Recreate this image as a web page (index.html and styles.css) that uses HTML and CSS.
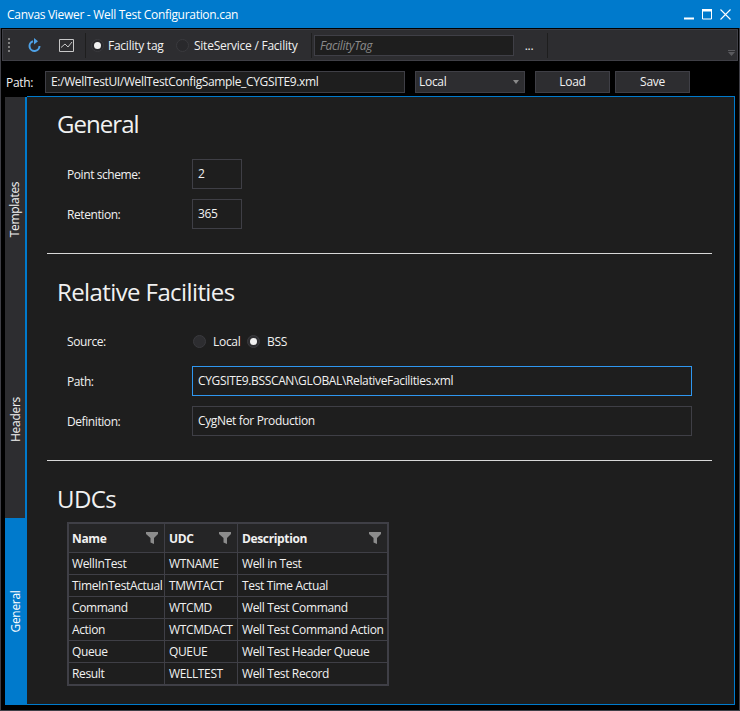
FILE: index.html
```html
<!DOCTYPE html>
<html lang="en">
<head>
    <meta charset="UTF-8">
    <meta name="viewport" content="width=device-width, initial-scale=1.0">
    <title>Canvas Viewer - Well Test Configuration.can</title>
    <link rel="stylesheet" href="styles.css">
</head>
<body>
    <div class="window">
        <div class="titlebar">
            <span class="title">Canvas Viewer - Well Test Configuration.can</span>
            <div class="window-buttons">
                <svg width="11" height="11" viewBox="0 0 11 11"><rect x="0" y="8.500" width="10" height="2" fill="#fff"/></svg>
                <svg width="11" height="11" viewBox="0 0 11 11"><path d="M.5.500h9v9.500h-9z" fill="none" stroke="#fff"/><rect x="0" y="0" width="10" height="2.500" fill="#fff"/></svg>
                <svg width="11" height="11" viewBox="0 0 11 11"><path d="M.5.500l10 10M10.500.500l-10 10" fill="none" stroke="#fff" stroke-width="1.100"/></svg>
            </div>
        </div>

        <div class="toolbar">
            <div class="grip"></div>
            <svg class="tool-icon refresh" width="13" height="15" viewBox="0 0 13 15"><path d="M5 3.200a5 5 0 1 0 6.500 4.800" fill="none" stroke="#4ea1e6" stroke-width="2"/><path d="M6 0v6.500l4-3.200z" fill="#4ea1e6"/></svg>
            <svg class="tool-icon chart" width="15" height="13" viewBox="0 0 15 13"><path d="M.5.500h14v12H.5z M2 8.500l4-3.500 3 3 4-5" fill="none" stroke="#c8c8c8"/></svg>
            <div class="tool-sep sep-one"></div>
            <label class="radio-row tool-radio-one"><span class="radio checked"></span>Facility tag</label>
            <label class="radio-row tool-radio-two"><span class="radio"></span>SiteService / Facility</label>
            <div class="tool-sep sep-two"></div>
            <div class="tag-input">FacilityTag</div>
            <span class="dots">...</span>
            <div class="tool-sep"></div>
            <svg class="overflow" width="7" height="6" viewBox="0 0 7 6"><path d="M0 0h7v1H0z M0 2h7L3.500 6z" fill="#5a5a5e"/></svg>
        </div>

        <div class="path-row">
            <span class="path-label">Path:</span>
            <div class="field path-field">E:/WellTestUI/WellTestConfigSample_CYGSITE9.xml</div>
            <div class="field select">Local<svg width="6" height="4" viewBox="0 0 6 4"><path d="M0 0h6L3 4z" fill="#8a8a8a"/></svg></div>
            <div class="field btn">Load</div>
            <div class="field btn">Save</div>
        </div>

        <div class="main">
            <div class="tabs">
                <div class="tab tab-templates"><span>Templates</span></div>
                <div class="tab tab-headers"><span>Headers</span></div>
                <div class="tab tab-general active"><span>General</span></div>
            </div>
            <div class="panel">
                <h2 class="first">General</h2>
                <div class="form-row row-scheme">
                    <span class="label">Point scheme:</span>
                    <div class="box small">2</div>
                </div>
                <div class="form-row">
                    <span class="label">Retention:</span>
                    <div class="box small">365</div>
                </div>
                <hr class="rule rule-one">

                <h2>Relative Facilities</h2>
                <div class="form-row source-row">
                    <span class="label">Source:</span>
                    <label class="radio-row source-local"><span class="radio"></span>Local</label>
                    <label class="radio-row"><span class="radio checked"></span>BSS</label>
                </div>
                <div class="form-row path-row-inner">
                    <span class="label">Path:</span>
                    <div class="box wide focused">CYGSITE9.BSSCAN\GLOBAL\RelativeFacilities.xml</div>
                </div>
                <div class="form-row">
                    <span class="label">Definition:</span>
                    <div class="box wide">CygNet for Production</div>
                </div>
                <hr class="rule rule-two">

                <h2>UDCs</h2>
                <table class="grid">
                    <thead>
                        <tr>
                            <th class="col-name"><div class="th-inner">Name<svg width="12" height="12" viewBox="0 0 12 12"><path d="M0 0h12v2L8 6v6L4.500 10.500V6L0 2z" fill="#8c8c8c"/></svg></div></th>
                            <th class="col-udc"><div class="th-inner">UDC<svg width="12" height="12" viewBox="0 0 12 12"><path d="M0 0h12v2L8 6v6L4.500 10.500V6L0 2z" fill="#8c8c8c"/></svg></div></th>
                            <th class="col-desc"><div class="th-inner">Description<svg width="12" height="12" viewBox="0 0 12 12"><path d="M0 0h12v2L8 6v6L4.500 10.500V6L0 2z" fill="#8c8c8c"/></svg></div></th>
                        </tr>
                    </thead>
                    <tbody>
                        <tr><td>WellInTest</td><td>WTNAME</td><td>Well in Test</td></tr>
                        <tr><td>TimeInTestActual</td><td>TMWTACT</td><td>Test Time Actual</td></tr>
                        <tr><td>Command</td><td>WTCMD</td><td>Well Test Command</td></tr>
                        <tr><td>Action</td><td>WTCMDACT</td><td>Well Test Command Action</td></tr>
                        <tr><td>Queue</td><td>QUEUE</td><td>Well Test Header Queue</td></tr>
                        <tr><td>Result</td><td>WELLTEST</td><td>Well Test Record</td></tr>
                    </tbody>
                </table>
            </div>
        </div>
    </div>
</body>
</html>
```

FILE: styles.css
```css
html, body {
    margin: 0;
    padding: 0;
    height: 100%;
    overflow: hidden;
}
body {
    font-family: "Open Sans", "Noto Sans", sans-serif;
    font-size: 12px;
    letter-spacing: -0.3px;
    color: #f1f1f1;
    background-color: #000;
}
.window {
    box-sizing: border-box;
    width: 740px;
    height: 711px;
    background-color: #000;
    border: 1px solid #3f3f46;
    border-top: none;
    display: flex;
    flex-direction: column;
}
.titlebar {
    height: 28px;
    flex: none;
    background-color: #007acc;
    color: #fff;
    display: flex;
    align-items: center;
    justify-content: space-between;
    padding: 0 9px 0 7px;
    margin: 0 -1px;
}
.title {
    letter-spacing: -0.3px;
}
.window-buttons {
    display: flex;
    gap: 7px;
}
.window-buttons svg {
    display: block;
}
.toolbar {
    height: 30px;
    margin: 1px 1px 0;
    flex: none;
    background-color: #2d2d30;
    border: 1px solid #3f3f46;
    display: flex;
    align-items: center;
    position: relative;
}
.grip {
    width: 2px;
    height: 14px;
    margin-left: 5px;
    background-image: linear-gradient(#808080 50%, transparent 50%);
    background-size: 2px 4px;
}
.tool-icon {
    margin-left: 18px;
    flex: none;
}
.tool-sep {
    width: 1px;
    height: 25px;
    flex: none;
    background-color: #1e1e1e;
}
.sep-one {
    margin: 0 5px 0 11px;
}
.sep-two {
    margin-right: 2px;
}
.radio-row {
    display: flex;
    align-items: center;
    flex: none;
}
.radio {
    box-sizing: border-box;
    width: 13px;
    height: 13px;
    flex: none;
    border-radius: 50%;
    background-color: #2d2d30;
    border: 1px solid #3a3a3e;
    margin-right: 7px;
    position: relative;
}
.radio.checked::after {
    content: "";
    position: absolute;
    left: 2px;
    top: 2px;
    width: 7px;
    height: 7px;
    border-radius: 50%;
    background-color: #f1f1f1;
}
.toolbar .radio {
    background-color: #29292c;
    margin-right: 5px;
}
.tool-radio-one {
    width: 85px;
    letter-spacing: -0.25px;
}
.tool-radio-one .radio {
    margin-right: 4px;
}
.tool-radio-two {
    width: 135px;
    letter-spacing: -0.25px;
}
.tag-input {
    box-sizing: border-box;
    width: 200px;
    height: 21px;
    flex: none;
    line-height: 19px;
    padding-left: 5px;
    background-color: #1e1e1e;
    border: 1px solid #3f3f46;
    color: #8a8a8a;
    font-style: italic;
}
.dots {
    box-sizing: border-box;
    width: 33px;
    padding-right: 3px;
    text-align: center;
}
.overflow {
    position: absolute;
    right: 2px;
    bottom: 4px;
}
.path-row {
    display: flex;
    align-items: center;
    height: 22px;
    margin-top: 10px;
    padding-left: 5px;
    flex: none;
}
.path-label {
    width: 39px;
}
.field {
    box-sizing: border-box;
    height: 22px;
    line-height: 20px;
    background-color: #2d2d30;
    border: 1px solid #3f3f46;
    padding-left: 5px;
}
.path-field {
    width: 360px;
    background-color: #1e1e1e;
    letter-spacing: -0.36px;
}
.select {
    width: 110px;
    margin-left: 10px;
    padding-left: 3px;
    display: flex;
    align-items: center;
    justify-content: space-between;
    padding-right: 5px;
}
.btn {
    width: 75px;
    padding: 0;
    text-align: center;
    margin-left: 5px;
}
.select + .btn {
    margin-left: 10px;
}
.main {
    flex: 1;
    display: flex;
    margin: 3px 4px 5px 4px;
    min-height: 0;
}
.tabs {
    width: 22px;
    flex: none;
    display: flex;
    flex-direction: column;
    padding-top: 1px;
}
.tab {
    background-color: #2d2d30;
    display: flex;
    align-items: center;
    justify-content: center;
    width: 20px;
    border-right: 2px solid #007acc;
}
.tab span {
    transform: rotate(-90deg);
    white-space: nowrap;
}
.tab-templates {
    height: 224px;
}
.tab-headers {
    height: 197px;
}
.tab-general {
    flex: 1;
}
.tab.active {
    background-color: #007acc;
    color: #fff;
}
.panel {
    flex: 1;
    background-color: #1e1e1e;
    border: 1px solid #007acc;
    border-left: none;
    padding: 0 22px 0 20px;
}
h2 {
    font-size: 24px;
    font-weight: 400;
    letter-spacing: -0.6px;
    line-height: 32px;
    margin: 0 0 0 10px;
    color: #f1f1f1;
}
h2.first {
    margin-top: 11px;
    letter-spacing: -0.95px;
}
.form-row {
    display: flex;
    align-items: center;
    margin-left: 20px;
    margin-top: 10px;
}
.label {
    width: 125px;
    flex: none;
    letter-spacing: -0.42px;
}
.row-scheme {
    margin-top: 19px;
}
.box {
    box-sizing: border-box;
    height: 30px;
    line-height: 28px;
    padding-left: 5px;
    border: 1px solid #3f3f46;
    letter-spacing: -0.35px;
}
.box.small {
    width: 50px;
}
.box.wide {
    width: 500px;
}
.box.focused {
    border-color: #2f97f0;
}
.rule {
    border: none;
    height: 1px;
    background-color: #d8d8d8;
    margin: 0;
}
.rule-one {
    margin-top: 24px;
    margin-bottom: 22px;
}
.rule-two {
    margin-top: 24px;
    margin-bottom: 22px;
}
.source-row {
    margin-top: 25px;
}
.source-row .label + .radio-row {
    margin-left: 1px;
}
.source-local {
    width: 54px;
}
.path-row-inner {
    margin-top: 16px;
}
.grid {
    border-collapse: collapse;
    margin: 7px 0 0 20px;
    border: 2px solid #3f3f46;
    table-layout: fixed;
    width: 322px;
    letter-spacing: -0.36px;
}
.grid th, .grid td {
    border: 1px solid #3f3f46;
    padding: 0 0 0 4px;
    height: 21px;
    text-align: left;
    overflow: hidden;
    white-space: nowrap;
}
.grid th:first-child, .grid td:first-child {
    padding-left: 3px;
}
.grid th {
    height: 28px;
    font-weight: 700;
    background-color: #252526;
}
.col-name {
    width: 92px;
}
.col-udc {
    width: 68px;
}
.th-inner {
    display: flex;
    align-items: center;
    justify-content: space-between;
    padding-right: 6px;
}
```
